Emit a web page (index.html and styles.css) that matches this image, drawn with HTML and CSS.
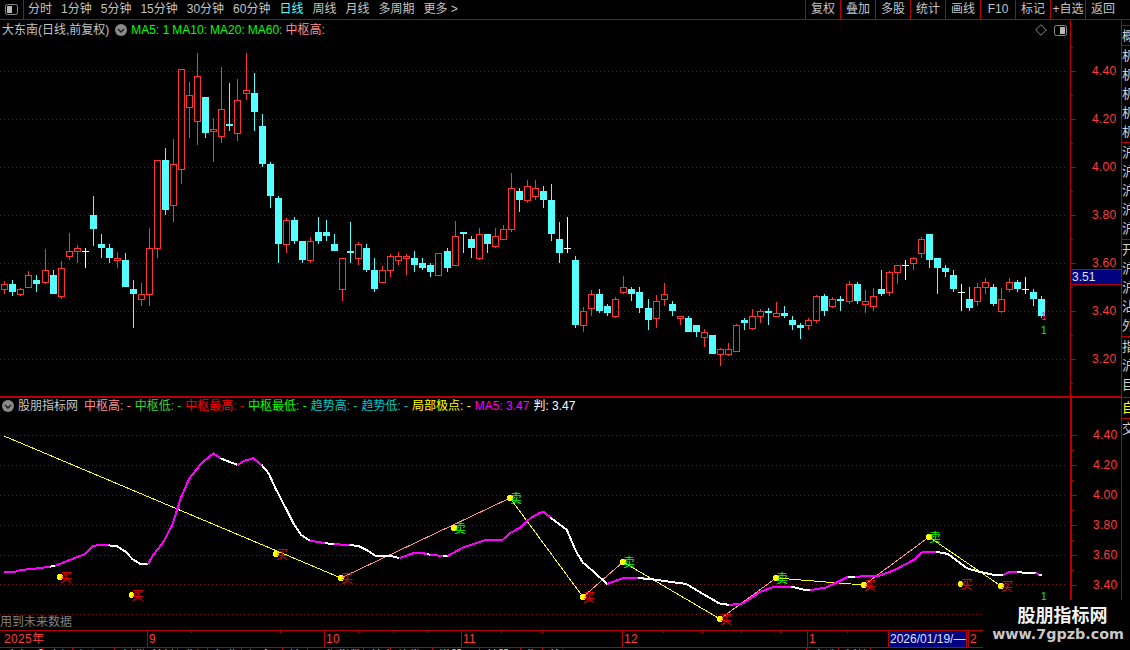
FILE: index.html
```html
<!DOCTYPE html>
<html lang="zh-CN">
<head>
<meta charset="utf-8">
<title>大东南 日线</title>
<link rel="stylesheet" href="styles.css">
</head>
<body>
<div class="app">
  <header class="topbar">
    <div class="layout-box">
      <svg class="icon-panel" viewBox="0 0 13 11"><rect class="panel-frame" x="0.5" y="0.5" width="12" height="10" rx="2"/><rect class="panel-fill" x="2" y="2" width="5" height="7"/></svg>
    </div>
    <nav class="tabs">
      <span>分时</span><span>1分钟</span><span>5分钟</span><span>15分钟</span><span>30分钟</span><span>60分钟</span><span class="active">日线</span><span>周线</span><span>月线</span><span>多周期</span><span>更多 &gt;</span>
    </nav>
    <div class="buttons">
      <span>复权</span><span>叠加</span><span>多股</span><span>统计</span><span>画线</span><span>F10</span><span>标记</span><span>+自选</span><span>返回</span>
    </div>
  </header>
  <main class="body">
    <div class="charts">
      <section class="pane upper">
        <div class="plot">
          <div class="legend">
            <span class="title">大东南(日线,前复权)</span>
            <svg class="icon-circle" viewBox="0 0 12 12"><circle class="circle-bg" cx="6" cy="6" r="6"/><path class="circle-mark" d="M3 5l3 3 3-3"/></svg>
            <span class="c-green">MA5: 1</span><span class="c-green">MA10:</span><span class="c-green">MA20:</span><span class="c-green">MA60:</span><span class="c-pink">中枢高:</span>
            <span class="legend-tools">
              <svg class="icon-diamond" viewBox="0 0 12 12"><path d="M6 .7L11.3 6 6 11.3.7 6z"/></svg>
              <svg class="icon-panel" viewBox="0 0 13 11"><rect class="panel-frame" x="0.5" y="0.5" width="12" height="10" rx="2"/><rect class="panel-fill" x="6" y="2" width="5" height="7"/></svg>
            </span>
          </div>
          <svg id="price" class="chart price-chart" viewBox="0 40 1070 356"></svg>
        </div>
        <div class="axis">
          <svg id="priceAxis" class="chart" viewBox="1071 20 50 376"></svg>
          <div class="price-tag">3.51</div>
        </div>
      </section>
      <section class="pane lower">
        <div class="plot">
          <div class="legend">
            <svg class="icon-circle first" viewBox="0 0 12 12"><circle class="circle-bg" cx="6" cy="6" r="6"/><path class="circle-mark" d="M3 5l3 3 3-3"/></svg>
            <span class="title">股朋指标网</span>
            <span class="c-pink">中枢高: -</span><span class="c-dgreen">中枢低: -</span><span class="c-red">中枢最高: -</span><span class="c-green">中枢最低: -</span><span class="c-teal">趋势高: -</span><span class="c-teal">趋势低: -</span><span class="c-yellow">局部极点: -</span><span class="c-magenta">MA5: 3.47</span><span class="c-white">判: 3.47</span>
          </div>
          <svg id="indicator" class="chart ind-chart" viewBox="0 414 1070 216"></svg>
          <div class="note">用到未来数据</div>
        </div>
        <div class="axis axis-lower">
          <svg id="indicatorAxis" class="chart" viewBox="1071 398 49 232"></svg>
        </div>
      </section>
      <svg id="dates" class="dates" viewBox="0 630 1122 18"></svg>
      <div id="strip" class="strip"></div>
    </div>
    <aside class="side">
      <div class="cell h20">概</div>
      <div class="cell h97">机机机机机</div>
      <div class="cell h97">沪沪沪沪沪</div>
      <div class="cell h97">开沪沪沾外</div>
      <div class="cell h61">指沪目</div>
      <div class="cell h21 yellow">自</div>
      <div class="cell h21">交</div>
    </aside>
  </main>
  <div class="watermark">
    <div class="wm-cn">股朋指标网</div>
    <div class="wm-en">www.7gpzb.com</div>
  </div>
</div>
<script src="chart.js"></script>
</body>
</html>
```
FILE: styles.css
```css
* { box-sizing: border-box; }
html, body { margin: 0; padding: 0; background: #000; }
body { font: 12px/1.2 "Liberation Sans", "Noto Sans CJK SC", sans-serif; color: #c4c4c4; }
svg { display: block; }

.app { position: relative; width: 1130px; height: 650px; background: #000; overflow: hidden; display: flex; flex-direction: column; }

.topbar { height: 20px; flex: none; display: flex; border-bottom: 1px solid #b80000; }
.layout-box { width: 24px; border-right: 1px solid #b80000; display: flex; align-items: center; justify-content: center; }
.icon-panel { width: 13px; height: 11px; }
.panel-frame { fill: none; stroke: #8a8a8a; }
.panel-fill { fill: #b8b8b8; }
.tabs { display: flex; gap: 9px; margin-left: 4px; align-items: center; }
.tabs .active { color: #54ffff; }
.buttons { display: flex; margin-left: auto; margin-right: 10px; }
.buttons span { width: 35px; border-left: 1px solid #b80000; display: flex; align-items: center; justify-content: center; }

.body { flex: 1; display: flex; min-height: 0; }
.charts { width: 1122px; display: flex; flex-direction: column; }
.pane { display: flex; flex: none; }
.upper { height: 378px; border-bottom: 2px solid #b80000; }
.lower { height: 232px; }
.plot { position: relative; width: 1070px; display: flex; flex-direction: column; }
.axis { position: relative; width: 52px; border-left: 1px solid #b80000; border-right: 1px solid #b80000; }
.axis-lower { border-left-width: 2px; }
.chart { width: 100%; height: 100%; }
.price-chart { height: 356px; }
.ind-chart { height: 216px; }

.legend { display: flex; align-items: center; gap: 3px; flex: none; padding-left: 2px; white-space: nowrap; }
.upper .legend { height: 20px; }
.lower .legend { height: 16px; gap: 4px; padding-left: 2px; }
.upper .legend .title { margin-right: 3px; }
.upper .legend .icon-circle { margin-right: 1px; }
.lower .legend .title { margin-right: 2px; }
.icon-circle { width: 12px; height: 12px; flex: none; }
.circle-bg { fill: #8a8a8a; }
.circle-mark { fill: none; stroke: #1a1a1a; stroke-width: 1.4; }
.legend-tools { margin-left: auto; margin-right: 3px; display: flex; align-items: center; gap: 7px; }
.icon-diamond { width: 12px; height: 12px; fill: none; stroke: #8a8a8a; }

.c-green { color: #00ff00; }
.c-dgreen { color: #3cd23c; }
.c-pink { color: #ff8c8c; }
.c-red { color: #ff0000; }
.c-teal { color: #00c8c8; }
.c-yellow { color: #ffff00; }
.c-magenta { color: #ff00ff; }
.c-white { color: #fff; }

.price-tag { position: absolute; left: 0; right: 0; top: 249px; height: 16px; line-height: 14px; padding-left: 1px; background: #000080; border-top: 1px solid #b80000; border-bottom: 1px solid #b80000; color: #dfe4f5; }

.note { position: absolute; left: 0; bottom: 0; width: 73px; height: 15px; line-height: 15px; background: #000; color: #808080; white-space: nowrap; }

.dates { width: 1122px; height: 18px; flex: none; }
.strip { display: flex; height: 2px; overflow: hidden; flex: none; }
.strip span { flex: none; border-right: 1px solid #b80000; color: #ddd; line-height: 17px; padding-left: 6px; white-space: nowrap; overflow: hidden; }

.side { width: 8px; flex: none; padding-top: 5px; display: flex; flex-direction: column; overflow: hidden; }
.cell { flex: none; width: 8px; overflow: hidden; border-top: 1px solid #b80000; font-size: 13px; line-height: 19px; color: #cfcfcf; word-break: break-all; }
.h20 { height: 20px; }
.h97 { height: 97px; }
.h61 { height: 61px; }
.h21 { height: 21px; }
.cell.yellow { color: #ffff00; }

.watermark { position: absolute; left: 983px; top: 600px; width: 147px; height: 50px; background: #000; text-align: center; }
.wm-cn { margin-top: 3px; padding-left: 12px; font: bold 18px/22px "Noto Sans CJK SC", sans-serif; color: #f2f2f2; }
.wm-en { padding-left: 3px; font: bold 14.3px/18px "DejaVu Sans", sans-serif; color: #c8c8c8; white-space: nowrap; }

/* svg colours */
.grid { stroke: #7c1212; stroke-width: 1; stroke-dasharray: 1 3; shape-rendering: crispEdges; }
.wick-r { fill: #ff3232; }
.wick-c { fill: #54ffff; }
.wick-w { fill: #fff; }
.body-r { fill: none; stroke: #ff3232; stroke-width: 1; shape-rendering: crispEdges; }
.body-c { fill: #54ffff; }
.crisp { shape-rendering: crispEdges; }
.tick { stroke: #b80000; stroke-width: 1; shape-rendering: crispEdges; }
.axis-label { fill: #ff3c3c; font-size: 12px; letter-spacing: 0.3px; }
.date-label { fill: #ff3c3c; font-size: 12px; letter-spacing: 0.3px; }
.date-box { fill: #000080; stroke: #b80000; stroke-width: 1; shape-rendering: crispEdges; }
.date-text { fill: #dfe4f5; font-size: 12px; }
.m1 { fill: #ff00ff; font-size: 10px; }
.g1 { fill: #00ff00; font-size: 10px; }
.ma { fill: none; stroke-width: 2; shape-rendering: crispEdges; stroke-linejoin: round; }
.ma-m { stroke: #ff00ff; }
.ma-w { stroke: #fff; }
.zig { fill: none; stroke-width: 1; shape-rendering: crispEdges; }
.zig-y { stroke: #ffff00; }
.zig-p { stroke: #ff9090; }
.dot { fill: #ffff00; shape-rendering: crispEdges; }
.mark { font: 12px "Noto Sans CJK SC", sans-serif; }
.mark-buy { fill: #ff0000; }
.mark-sell { fill: #00ff00; }
```
FILE: chart.js
```js
var NS = "http://www.w3.org/2000/svg";
function el(parent, name, attrs, text) {
  var n = document.createElementNS(NS, name);
  for (var k in attrs) n.setAttribute(k, attrs[k]);
  if (text !== undefined) n.textContent = text;
  parent.appendChild(n);
  return n;
}

/* [kind, bodyTop, bodyBottom, high, low], in rows measured from a block's base y, 3 units per pixel */
var blocks = [
  [40, "r733 749 724 762,c732 756 720 768,r748 764 744 767,r706 743 693 743,c720 732 705 756,r691 728 627 731,c705 762 690 762,r685 770 663 776,r634 650 579 660,r625 635 615 669,w634 634 624 684,c525 567 468 618,c612 624 582 654,c624 654 612 669,r655 662 636 684,c660 741 639 741,c747 762 720 864,r763 779 729 798,r625 764 564 798,r361 626 361 654,c360 510 324 525,r373 497 297 546,r88 389 88 432,r166 203 126 294,r109 245 39 315,c171 279 171 294,r268 275 234 366,r208 290 81 309,c252 258 129 273,r181 281 117 303,r151 161 39 180,c159 216 99 273,c258 372 222 381,c372 468 366 504,c474 612 468 669,r541 614 534 639"],
  [160, "c180 243 171 252,c243 300 243 309,r243 303 231 309,c216 243 171 252,c216 228 180 243,c252 273 222 273,r294 390 294 423,c273 279 186 309,r252 297 246 315,c264 330 252 336,c330 387 294 396,r330 369 318 369,r288 333 282 351,r288 303 276 315,r288 297 282 345,c294 315 273 336,c309 324 294 330,c315 336 309 351,r279 348 279 348,c273 324 264 336,r228 318 183 318,c216 222 216 279,c237 264 228 294,r222 297 204 300,c222 252 222 279,r228 261 204 264,r207 240 195 240,r84 210 39 216,c93 120 84 156,r78 123 60 129,r84 111 60 120,c93 120 78 144,c120 222 72 243,c237 279 186 309,w265 265 171 279,c300 495 288 504,r453 498 441 516,r402 447 390 468,c402 453 387 459,c438 459 432 468,r417 471 411 474"],
  [220, "r202 219 168 222,c207 222 201 243,c216 264 201 279,c264 300 237 330,r243 297 225 324,r222 240 189 258,c252 273 243 288,r288 297 288 315,c294 336 288 336,c315 336 315 351,r336 353 327 381,c345 402 345 402,r388 404 384 438,r388 404 369 408,r315 395 312 395,c300 309 294 330,r288 327 267 330,r273 291 267 309,c273 279 264 315,r280 290 246 290,c279 288 258 294,c300 315 288 330,c315 324 309 357,r300 317 294 330,r228 303 225 309,c228 273 222 288,r237 261 231 264,c237 243 228 273,r192 246 183 252,c192 243 186 252,r244 255 210 279,r228 261 204 273,c207 222 150 228,r156 219 153 228,r135 158 135 192,w135 135 120 180,r114 131 111 150,r57 102 51 114,c42 120 42 144,c114 144 114 222,c144 156 135 171,c165 207 150 216,w216 216 192 273,c237 264 201 273,r201 246 189 258,r186 204 174 222,c201 252 192 258,r237 276 204 279,r186 210 174 216,c186 207 180 216,w207 207 171 222,c216 237 207 258,c237 288 228 294"]
];

var price = document.getElementById("price");
var ind = document.getElementById("indicator");

[71, 119, 167, 215, 263, 311, 359].forEach(function (y) {
  el(price, "line", { "class": "grid", x1: 0, x2: 1067, y1: y + 0.5, y2: y + 0.5 });
});

var index = 0;
blocks.forEach(function (b) {
  b[1].split(",").forEach(function (s) {
    var kind = s[0];
    var v = s.slice(1).split(" ").map(function (z) { return Math.round(b[0] + z / 3); });
    var top = v[0], bot = v[1], hi = v[2], lo = v[3];
    var cx = Math.round(4.33 + 8.04 * index);
    if (kind === "r") {
      if (hi < top) el(price, "rect", { "class": "wick-r crisp", x: cx, y: hi, width: 1, height: top - hi });
      if (lo > bot) el(price, "rect", { "class": "wick-r crisp", x: cx, y: bot, width: 1, height: lo - bot });
      el(price, "rect", { "class": "body-r", x: cx - 2.5, y: top + 0.5, width: 6, height: Math.max(bot - top - 1, 1) });
    } else if (kind === "c") {
      el(price, "rect", { "class": "wick-c crisp", x: cx, y: hi, width: 1, height: lo - hi });
      el(price, "rect", { "class": "body-c crisp", x: cx - 3, y: top, width: 7, height: bot - top });
    } else {
      el(price, "rect", { "class": "wick-w crisp", x: cx, y: hi, width: 1, height: lo - hi });
      el(price, "rect", { "class": "wick-w crisp", x: cx - 3, y: top, width: 7, height: 1 });
    }
    index++;
  });
});
el(price, "text", { "class": "m1", x: 1041, y: 320 }, "1");
el(price, "text", { "class": "g1", x: 1041, y: 334 }, "1");

/* price axis */
var pAxis = document.getElementById("priceAxis");
["4.40", "4.20", "4.00", "3.80", "3.60", "3.40", "3.20"].forEach(function (label, i) {
  var y = 71 + 48 * i;
  el(pAxis, "line", { "class": "tick", x1: 1071, x2: 1076, y1: y + 0.5, y2: y + 0.5 });
  el(pAxis, "line", { "class": "tick", x1: 1071, x2: 1073, y1: y + 24.5, y2: y + 24.5 });
  el(pAxis, "line", { "class": "tick", x1: 1071, x2: 1073, y1: y - 23.5, y2: y - 23.5 });
  el(pAxis, "text", { "class": "axis-label", x: 1092, y: y + 4 }, label);
});

/* indicator pane */
[435, 465, 495, 525, 555, 584, 614].forEach(function (y) {
  el(ind, "line", { "class": "grid", x1: 0, x2: 1067, y1: y + 0.5, y2: y + 0.5 });
});

var Z1 = [0, 430], Z2 = [540, 480];
function pt(o, zx, zy) { return [o[0] + zx / 2.904, o[1] + zy / 3]; }
var maPath = [
  ["m", Z1, "12 427,45 425,60 420,100 416,145 410"],
  ["w", Z1, "145 410,160 408"],
  ["m", Z1, "160 408,200 391,245 373,268 349,290 344,315 346"],
  ["w", Z1, "315 346,340 349,365 365,385 388,408 402,430 402"],
  ["m", Z1, "430 402,445 375,475 335,500 285,525 205,550 145,585 100,620 70,640 85"],
  ["w", Z1, "640 85,690 105"],
  ["m", Z1, "690 105,710 92,735 85,760 105"],
  ["w", Z1, "760 105,780 130,800 175,830 235,855 285,875 315,900 332"],
  ["m", Z1, "900 332,945 340"],
  ["w", Z1, "945 340,970 342"],
  ["m", Z1, "970 342,1015 346"],
  ["w", Z1, "1015 346,1040 347,1065 360,1090 377,1130 377,1160 384"],
  ["m", Z1, "1160 384,1205 368,1225 368,1240 373"],
  ["w", Z1, "1240 373,1250 374"],
  ["m", Z1, "1250 374,1285 378"],
  ["w", Z1, "1285 378,1300 378"],
  ["m", Z1, "1300 378,1345 352,1375 342,1410 330,1460 329,1480 310,1510 293,1540 265,1568 248"],
  ["m", Z2, "0 100,10 95,30 112"],
  ["w", Z2, "30 112,50 128,78 150,105 215,125 248,150 270,195 312"],
  ["m", Z2, "195 312,240 295,285 295"],
  ["w", Z2, "285 295,315 296,360 303,425 312,470 340,520 370,550 375"],
  ["m", Z2, "550 375,590 370,640 335,680 320,730 320"],
  ["w", Z2, "730 320,770 330,785 330"],
  ["m", Z2, "785 330,830 323,895 290"],
  ["w", Z2, "895 290,915 290"],
  ["m", Z2, "915 290,985 287,1030 270,1085 240,1110 217,1150 215"],
  ["w", Z2, "1150 215,1185 222,1240 265,1275 275,1320 285,1345 285"],
  ["m", Z2, "1345 285,1365 275,1385 275"],
  ["w", Z2, "1385 275,1410 279,1440 278"],
  ["m", Z2, "1440 278,1450 285"],
  ["w", Z2, "1450 285,1457 285"]
];

var pivots = [[4, 436], [341, 578], [510, 498], [583, 597], [623, 562], [720, 619], [776, 578], [864, 585], [929, 537], [1001, 586]];
for (var i = 0; i < pivots.length - 1; i++) {
  var a = pivots[i], c = pivots[i + 1];
  el(ind, "line", { "class": "zig " + (c[1] < a[1] ? "zig-p" : "zig-y"), x1: a[0], y1: a[1], x2: c[0], y2: c[1] });
}
maPath.forEach(function (seg) {
  var points = seg[2].split(",").map(function (s) {
    var p = s.split(" ");
    return pt(seg[1], +p[0], +p[1]).map(function (n) { return n.toFixed(1); }).join(",");
  }).join(" ");
  el(ind, "polyline", { "class": "ma ma-" + seg[0], points: points });
});

var marks = [
  [60, 577, "买"], [131.5, 595, "买"], [276, 554, "买"], [341, 578, "买"], [454, 528, "卖"],
  [510, 498, "卖"], [583, 597, "买"], [623, 562, "卖"], [720, 619, "买"], [776, 578, "卖"],
  [864, 585, "买"], [929, 537, "卖"], [960.5, 584, "买"], [1001, 586, "买"]
];
marks.forEach(function (m) {
  el(ind, "circle", { "class": "dot", cx: m[0], cy: m[1], r: 3 });
  el(ind, "text", { "class": "mark " + (m[2] === "买" ? "mark-buy" : "mark-sell"), x: m[0], y: m[1] + 5 }, m[2]);
});
el(ind, "text", { "class": "g1", x: 1041, y: 600 }, "1");

var iAxis = document.getElementById("indicatorAxis");
["4.40", "4.20", "4.00", "3.80", "3.60", "3.40"].forEach(function (label, i) {
  var y = 435 + 30 * i;
  el(iAxis, "line", { "class": "tick", x1: 1071, x2: 1076, y1: y + 0.5, y2: y + 0.5 });
  el(iAxis, "line", { "class": "tick", x1: 1071, x2: 1073, y1: y + 15.5, y2: y + 15.5 });
  el(iAxis, "text", { "class": "axis-label", x: 1092, y: y + 4 }, label);
});

/* date axis */
var dates = document.getElementById("dates");
el(dates, "line", { "class": "tick", x1: 0, x2: 983, y1: 630.5, y2: 630.5 });
el(dates, "line", { "class": "tick", x1: 0, x2: 983, y1: 647.5, y2: 647.5 });
[147, 324, 461, 622, 807, 968].forEach(function (x) {
  el(dates, "line", { "class": "tick", x1: x + 0.5, x2: x + 0.5, y1: 630, y2: 648 });
});
[191, 280, 358, 393, 427, 501, 542, 663, 702, 741, 780, 847].forEach(function (x) {
  el(dates, "line", { "class": "tick", x1: x + 0.5, x2: x + 0.5, y1: 631, y2: 633 });
});
[[4, "2025年"], [149, "9"], [326, "10"], [463, "11"], [624, "12"], [809, "1"], [970, "2"]].forEach(function (d) {
  el(dates, "text", { "class": "date-label", x: d[0], y: 643 }, d[1]);
});
el(dates, "rect", { "class": "date-box", x: 888.5, y: 630.5, width: 78, height: 17 });
el(dates, "text", { "class": "date-text", x: 890, y: 643 }, "2026/01/19/—");

/* sheet strip under the date axis */
var strip = document.getElementById("strip");
[["全部A股", 43], ["上证", 30], ["深证", 42], ["创业", 29], ["科创", 34], ["北证", 30], ["行业", 34], ["概念", 41], ["地区", 25], ["风格", 24], ["指数", 32], ["基金", 27], ["债券", 42], ["港股", 47], ["美股", 41], ["期货", 22], ["外汇", 264], ["自选", 32], ["板块", 32]].forEach(function (t) {
  var s = document.createElement("span");
  s.textContent = t[0];
  s.style.width = t[1] + "px";
  strip.appendChild(s);
});
```
